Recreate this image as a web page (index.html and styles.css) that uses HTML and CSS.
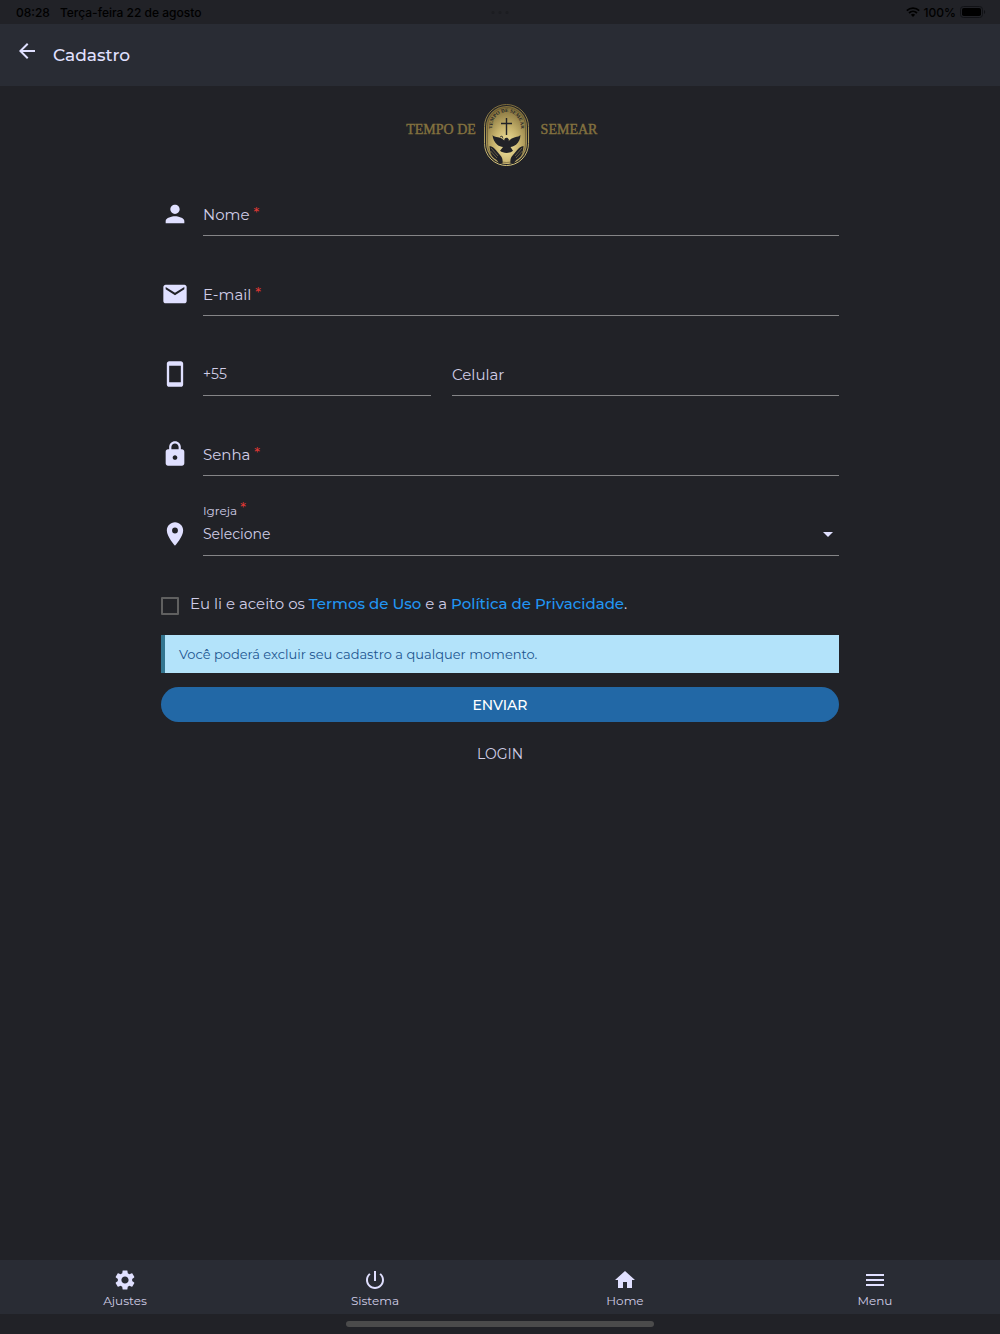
FILE: index.html
```html
<!DOCTYPE html>
<html lang="pt-BR">
<head>
<meta charset="UTF-8" />
<meta name="viewport" content="width=device-width, initial-scale=1" />
<title>Cadastro</title>
<link rel="stylesheet" href="styles.css">
</head>
<body>

<!-- Barra de status -->
<div class="status-bar">
  <span>08:28</span>
  <span class="status-date">Terça-feira 22 de agosto</span>
  <span class="status-dots"><i></i><i></i><i></i></span>
  <span class="status-right">
    <svg width="14" height="10" viewBox="0 0 14 10" fill="none" stroke="#000" stroke-width="1.7">
      <path d="M.8 3.7a9 9 0 0 1 12.4 0M3 6a6 6 0 0 1 8 0" />
      <path d="M7 10 4.900 7.800a3 3 0 0 1 4.200 0z" fill="#000" stroke="none" />
    </svg>
    <span>100%</span>
    <svg width="26" height="12" viewBox="0 0 26 12">
      <rect x=".5" y=".5" width="22" height="11" rx="3" fill="none" stroke="#111216" />
      <rect x="2" y="2" width="19" height="8" rx="1.8" fill="#000" />
      <path d="M24 4v4c1.600-.6 1.600-3.400 0-4z" fill="#111216" />
    </svg>
  </span>
</div>

<header class="topbar">
  <button type="button" class="back" aria-label="Voltar">
    <svg width="24" height="24" viewBox="0 0 24 24"><path d="M20 11H7.830l5.590-5.590L12 4l-8 8 8 8 1.410-1.410L7.830 13H20z" /></svg>
  </button>
  <h1>Cadastro</h1>
</header>

<main>
  <svg class="logo" width="200" height="70" viewBox="0 0 200 70" role="img" aria-label="Tempo de Semear">
    <defs>
      <radialGradient id="gold" cx=".5" cy=".68" r=".65">
        <stop offset="0" stop-color="#f6e8a4" />
        <stop offset=".5" stop-color="#c6b26c" />
        <stop offset="1" stop-color="#82703c" />
      </radialGradient>
      <linearGradient id="ring" x1="0" y1="0" x2="0" y2="1">
        <stop offset="0" stop-color="#7d6c3b" />
        <stop offset="1" stop-color="#d8c67c" />
      </linearGradient>
      <path id="arch" d="M92.500 32v-6a14 14 0 0 1 28 0v6" />
    </defs>
    <text class="logo-name" x="41" y="34" text-anchor="middle">TEMPO DE</text>
    <text class="logo-name" x="169" y="34" text-anchor="middle">SEMEAR</text>
    <rect x="84.500" y="4.500" width="44" height="61" rx="22" fill="#212227" stroke="url(#ring)" />
    <rect x="86" y="6" width="41" height="58" rx="20.500" fill="url(#gold)" />
    <rect x="87.500" y="7.500" width="38" height="55" rx="19" fill="none" stroke="#4c4228" stroke-width=".5" />
    <text class="logo-arch"><textPath href="#arch" startOffset="50%" text-anchor="middle">TEMPO DE SEMEAR</textPath></text>
    <path d="M105.800 18h1.400v4.800h4.800v1.400h-4.800V35h-1.400V24.200H101v-1.400h4.800z" fill="#212227" />
    <!-- pomba -->
    <path d="M92.500 35c1 1.500 3 1.800 5.500 2.300 2.800.6 5 1.700 6.300 3.200-.2-1.400.6-2.600 2-2.700 1.200-.1 2 .6 2.400 1.600l1 .6-1 .4v.8c1.300-1.800 3.500-3.200 6.300-3.900 2.500-.6 4.500-1 5.500-2.300-.2 4-1.700 7.500-4.500 9.700-1.700 1.300-3.700 2-5.500 2.200l2.500 3.800c-1.500 1.400-4 2.200-6.500 2.200s-5-.8-6.500-2.200l3-3.700c-2-.2-4-.9-5.700-2.300-2.800-2.200-4.400-5.700-4.800-9.700z" fill="#212227" />
    <path d="m100 37 2-1 1 2.500" fill="none" stroke="#212227" stroke-width=".8" />
    <!-- maos -->
    <path d="M89.500 46c2.500.3 4.500 1.800 6.300 4l4.200 5c2.500 2.500 2.900 5 2.500 8.500h-3.700c-.4-2.600-2-3.600-4.300-5.100-3.300-2.100-4.500-6.400-5-12.400zM123.500 46c-2.500.3-4.500 1.800-6.300 4l-4.200 5c-2.500 2.500-2.900 5-2.500 8.500h3.700c.4-2.600 2-3.600 4.300-5.100 3.300-2.100 4.500-6.400 5-12.400z" fill="#212227" />
    <path d="m91 48 7 8M90.500 51l6.500 7M122 48l-7 8M122.500 51l-6.500 7" stroke="#c9b66f" stroke-width=".4" />
  </svg>

  <form class="signup">
    <div class="row">
      <svg class="row-icon" viewBox="0 0 24 24"><path d="M12 12c2.210 0 4-1.790 4-4s-1.790-4-4-4-4 1.790-4 4 1.790 4 4 4zm0 2c-2.670 0-8 1.340-8 4v2h16v-2c0-2.660-5.330-4-8-4z" /></svg>
      <div class="field">
        <label for="nome">Nome <span class="req">*</span></label>
        <input type="text" id="nome" required />
      </div>
    </div>

    <div class="row">
      <svg class="row-icon" viewBox="0 0 24 24"><path d="M20 4H4c-1.100 0-1.990.9-1.990 2L2 18c0 1.100.9 2 2 2h16c1.100 0 2-.9 2-2V6c0-1.100-.9-2-2-2zm0 4-8 5-8-5V6l8 5 8-5v2z" /></svg>
      <div class="field">
        <label for="email">E-mail <span class="req">*</span></label>
        <input type="email" id="email" required />
      </div>
    </div>

    <div class="row">
      <svg class="row-icon" viewBox="0 0 24 24"><path d="M17 1.010 7 1c-1.100 0-2 .9-2 2v18c0 1.100.9 2 2 2h10c1.100 0 2-.9 2-2V3c0-1.100-.9-1.990-2-1.990zM17 19H7V5h10v14z" /></svg>
      <div class="field field-ddi">
        <input type="tel" value="+55" aria-label="DDI" />
      </div>
      <div class="field">
        <label for="celular">Celular</label>
        <input type="tel" id="celular" />
      </div>
    </div>

    <div class="row">
      <svg class="row-icon" viewBox="0 0 24 24"><path d="M18 8h-1V6c0-2.760-2.240-5-5-5S7 3.240 7 6v2H6c-1.100 0-2 .9-2 2v10c0 1.100.9 2 2 2h12c1.100 0 2-.9 2-2V10c0-1.100-.9-2-2-2zm-6 9c-1.100 0-2-.9-2-2s.9-2 2-2 2 .9 2 2-.9 2-2 2zm3.100-9H8.900V6c0-1.710 1.390-3.100 3.100-3.100 1.710 0 3.100 1.390 3.100 3.100v2z" /></svg>
      <div class="field">
        <label for="senha">Senha <span class="req">*</span></label>
        <input type="password" id="senha" required />
      </div>
    </div>

    <div class="row">
      <svg class="row-icon" viewBox="0 0 24 24"><path d="M12 2C8.130 2 5 5.130 5 9c0 5.250 7 13 7 13s7-7.750 7-13c0-3.870-3.130-7-7-7zm0 9.500a2.500 2.500 0 0 1 0-5 2.500 2.500 0 0 1 0 5z" /></svg>
      <div class="field field-select">
        <label class="floated" for="igreja">Igreja <span class="req">*</span></label>
        <select id="igreja" required>
          <option>Selecione</option>
        </select>
        <svg class="caret" width="10" height="5" viewBox="0 0 10 5"><path d="m0 0 5 5 5-5z" /></svg>
      </div>
    </div>

    <div class="terms">
      <input type="checkbox" id="aceito" />
      <label for="aceito">Eu li e aceito os <a href="#">Termos de Uso</a> e a <a href="#">Política de Privacidade</a>.</label>
    </div>

    <p class="notice">Você poderá excluir seu cadastro a qualquer momento.</p>

    <button type="submit" class="submit">ENVIAR</button>
    <a href="#" class="login">LOGIN</a>
  </form>
</main>

<nav class="tabs">
  <a href="#">
    <svg viewBox="0 0 24 24"><path d="M19.140 12.940c.04-.3.060-.61.060-.94 0-.32-.02-.64-.07-.94l2.030-1.580c.18-.14.23-.41.12-.61l-1.920-3.320c-.12-.22-.37-.29-.59-.22l-2.390.96c-.5-.38-1.030-.7-1.620-.94l-.36-2.540c-.04-.24-.24-.41-.48-.41h-3.840c-.24 0-.43.17-.47.410l-.36 2.540c-.59.24-1.130.57-1.620.94l-2.390-.96c-.22-.08-.47 0-.59.220L2.740 8.870c-.12.21-.08.470.12.610l2.030 1.580c-.05.3-.09.63-.09.940s.02.640.07.940l-2.030 1.580c-.18.140-.23.410-.12.610l1.920 3.320c.12.220.37.290.59.220l2.390-.96c.5.380 1.030.7 1.620.94l.36 2.540c.05.240.24.410.48.410h3.840c.24 0 .44-.17.470-.41l.36-2.540c.59-.24 1.130-.56 1.620-.94l2.390.96c.22.080.47 0 .59-.22l1.920-3.320c.12-.22.070-.47-.12-.61l-2.010-1.580zM12 15.600c-1.980 0-3.600-1.620-3.600-3.600s1.620-3.600 3.600-3.600 3.600 1.620 3.600 3.600-1.620 3.600-3.600 3.600z" /></svg>
    <span>Ajustes</span>
  </a>
  <a href="#">
    <svg viewBox="0 0 24 24"><path d="M13 3h-2v10h2V3zm4.830 2.170-1.420 1.420C17.990 7.860 19 9.810 19 12c0 3.870-3.130 7-7 7s-7-3.130-7-7c0-2.190 1.010-4.140 2.580-5.420L6.170 5.170C4.230 6.820 3 9.260 3 12c0 4.970 4.030 9 9 9s9-4.030 9-9c0-2.740-1.230-5.180-3.170-6.830z" /></svg>
    <span>Sistema</span>
  </a>
  <a href="#">
    <svg viewBox="0 0 24 24"><path d="M10 20v-6h4v6h5v-8h3L12 3 2 12h3v8z" /></svg>
    <span>Home</span>
  </a>
  <a href="#">
    <svg viewBox="0 0 24 24"><path d="M3 18h18v-2H3v2zm0-5h18v-2H3v2zm0-7v2h18V6H3z" /></svg>
    <span>Menu</span>
  </a>
</nav>
<div class="home-indicator"></div>

</body>
</html>
```

FILE: styles.css
```css
* { box-sizing: border-box; }
body {
  margin: 0; min-height: 100vh; display: flex; flex-direction: column;
  background: #212227; color: #d0cde6; font-family: Montserrat, Inter, sans-serif; font-size: 15px;
}
svg { display: block; fill: #e0e0ff; }
a { text-decoration: none; }
input, select, button { font: inherit; color: inherit; }

/* Barra de status */
.status-bar {
  position: relative; display: flex; align-items: center; gap: 10px;
  height: 24px; padding: 0 14px 0 16px; color: #000; font-family: Inter, sans-serif; font-size: 12px; font-weight: 500;
}
.status-right { display: flex; align-items: center; gap: 4px; margin-left: auto; }
.status-right svg { fill: none; }
.status-dots { position: absolute; left: 50%; top: 11px; transform: translateX(-50%); display: flex; gap: 4px; }
.status-dots i { width: 3px; height: 3px; border-radius: 50%; background: #1c1d21; }

.topbar {
  display: flex; align-items: center; gap: 14px; height: 62px; padding: 0 15px;
  background: #292c34; color: #e0e0ff;
}
.topbar h1 { margin: 0; font-size: 17px; font-weight: 500; }
.back { padding: 0 0 8px; background: none; border: none; cursor: pointer; }

main { flex: 1; width: 100%; max-width: 710px; margin: 0 auto; padding: 14px 16px; }
.logo { margin: 0 auto 10px; }
.logo-name { font-family: "Liberation Serif", serif; font-size: 14px; fill: #84723f; stroke: #84723f; stroke-width: .4; }
.logo-arch { font-family: "Liberation Serif", serif; font-size: 5px; font-weight: bold; fill: #212227; }

/* Campos */
.row { display: flex; gap: 21px; height: 56px; margin-bottom: 24px; }
.row-icon { flex: none; width: 28px; height: 28px; margin: 20px -7px 0 0; }
.field { position: relative; flex: 1; display: flex; border-bottom: 1px solid #858587; }
.field-ddi { flex: 0 0 36%; max-width: 228px; }
.field label { position: absolute; left: 0; top: 24px; line-height: 22px; pointer-events: none; }
.field label.floated { top: 0; font-size: 12px; }
.req { color: #e53935; font-size: 15px; line-height: 1; vertical-align: 2px; }
.field input, .field select {
  width: 100%; padding: 23px 0 10px; line-height: 22px; font-size: 14px;
  background: none; border: none; border-radius: 0; outline: none; appearance: none;
}
.caret { position: absolute; right: 6px; bottom: 18px; pointer-events: none; }

.terms { display: flex; gap: 11px; margin-top: 37px; line-height: 22px; }
.terms input {
  flex: none; appearance: none; width: 18px; height: 18px; margin: 4px 0 0;
  border: 2px solid #606060; border-radius: 1px;
}
.terms a { color: #2196f3; font-weight: 500; }

.notice {
  margin: 20px 0 14px; padding: 8px 14px; border-left: 4px solid #33758f;
  background: #b3e3fa; color: #1c5590; font-size: 13px; line-height: 22px;
}
.submit {
  display: block; width: 100%; height: 35px; border: none; border-radius: 18px;
  background: #2268a6; color: #fff; font-size: 14px; font-weight: 500; cursor: pointer;
}
.login { display: block; width: 100px; margin: 21px auto; color: inherit; font-size: 14px; line-height: 22px; text-align: center; }

/* Menu inferior */
.tabs { display: flex; height: 54px; background: #292c34; }
.tabs a { flex: 1; display: flex; flex-direction: column; align-items: center; padding-top: 8px; color: inherit; font-size: 12px; line-height: 18px; }
.tabs svg { width: 24px; height: 24px; }
.home-indicator { width: 308px; height: 6px; margin: 7px auto; border-radius: 3px; background: #4b4b4b; }
```
